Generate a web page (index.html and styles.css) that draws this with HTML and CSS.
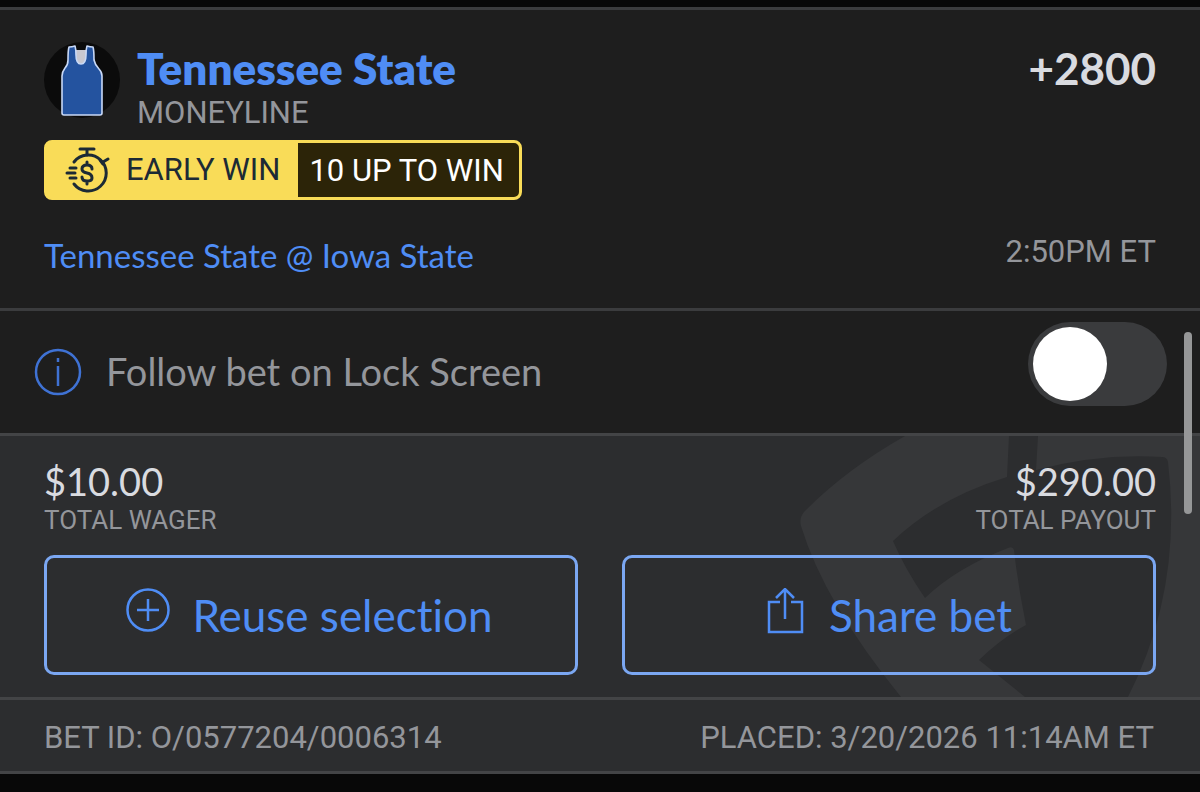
FILE: index.html
```html
<!DOCTYPE html>
<html lang="en">
<head>
	<title>Bet slip</title>
	<meta charset="utf-8">
	<link rel="stylesheet" href="styles.css">
</head>

<body>
	<main class="slip">
		<section class="selection">
			<div class="row">
				<div class="team">
					<svg class="jersey" viewBox="0 0 76 76" aria-hidden="true">
						<circle cx="38" cy="38" r="38" fill="#0b0b0b"/>
						<path d="M31 8H43V18Q42 24 37 24Q32 24 31 18Z" fill="#c9c8d0"/>
						<path d="M25 5Q28 5 31 4Q32 7 32 13Q32 22 37 22Q42 22 42 13Q42 7 43 4Q46 5 49 5Q50 8 50 18Q51 23 55 27Q58 30 58 34V71Q58 73 56 73H20Q18 73 18 71V34Q18 30 21 26Q24 23 24 18Q24 8 25 5Z" fill="#24539f" stroke="#c9d9f7" stroke-width="1.6" stroke-linejoin="round"/>
					</svg>
					<div>
						<h1>Tennessee State</h1>
						<p class="caps">MONEYLINE</p>
					</div>
				</div>
				<p class="odds">+2800</p>
			</div>
			<div class="badge">
				<span class="badge-name">
					<svg class="stopwatch" viewBox="0 0 46 48" aria-hidden="true">
						<g fill="none" stroke="#1c2a35" stroke-width="3" stroke-linecap="round" stroke-linejoin="round">
							<path d="M15 3H29M22 3V9M38 16L43 13M35 14L38 18"/>
							<path d="M9 16A18 18 0 1 1 9 38"/>
							<path d="M5 22H11M2 27H10M5 32H11"/>
							<path d="M27 23Q27 19 22 19Q17 19 17 23Q17 26 22 27Q27 28 27 32Q27 35 22 35Q17 35 17 31M22 16V19M22 35V38"/>
						</g>
					</svg>
					EARLY WIN
				</span>
				<span class="badge-rule">10 UP TO WIN</span>
			</div>
			<div class="row game">
				<a href="#">Tennessee State @ Iowa State</a>
				<time class="caps">2:50PM ET</time>
			</div>
		</section>

		<section class="follow">
			<svg class="info" viewBox="0 0 48 48" aria-hidden="true">
				<circle cx="24" cy="24" r="22" fill="none" stroke="#3f72d4" stroke-width="2.5"/>
				<path d="M24 10V14M24 18V38" stroke="#3f72d4" stroke-width="2.5"/>
			</svg>
			<label for="lock">Follow bet on Lock Screen</label>
			<input type="checkbox" id="lock" class="toggle">
		</section>

		<section class="totals">
			<svg class="shield" viewBox="0 0 420 261" aria-hidden="true">
				<path d="M125 0Q65 34 24 76Q19 82 21 90Q44 166 121 261H245L199 224Q222 202 246 189Q238 150 234 114Q233 110 228 112Q176 132 145 162Q125 133 113 105Q158 62 227 41L229 0Z"/>
				<path d="M258 0L256 34Q320 17 382 21Q387 21 388 26Q403 153 348 261H420V0Z"/>
			</svg>
			<div class="row">
				<div>
					<p class="amount">$10.00</p>
					<p class="total-name">TOTAL WAGER</p>
				</div>
				<div class="payout">
					<p class="amount">$290.00</p>
					<p class="total-name">TOTAL PAYOUT</p>
				</div>
			</div>
			<div class="buttons">
				<button type="button">
					<svg class="btn-icon" viewBox="0 0 44 46" aria-hidden="true">
						<path d="M22 11V33M11 22H33"/>
						<circle cx="22" cy="22" r="20.5"/>
					</svg>
					Reuse selection
				</button>
				<button type="button">
					<svg class="btn-icon" viewBox="0 0 44 46" aria-hidden="true">
						<path d="M17 14H6V44H39V14H28M22 31V2M13 10L22 1L31 10"/>
					</svg>
					Share bet
				</button>
			</div>
		</section>

		<footer class="caps">
			<span>BET ID: O/0577204/0006314</span>
			<span>PLACED: 3/20/2026 11:14AM ET</span>
		</footer>
		<div class="scroll-thumb"></div>
	</main>
</body>
</html>
```
FILE: styles.css
```css
*{
	box-sizing: border-box;
}

body{
	margin: 0;
	padding: 7px 0 18px;
	background: #080808;
	color: #d9dbe0;
	font-family: Lato, "Liberation Sans", sans-serif;
	font-variant-ligatures: none;
}

h1, p{
	margin: 0;
}

.slip{
	position: relative;
	border-top: 3px solid #3b3c3e;
	border-bottom: 3px solid #434446;
	background: #1e1e1e;
}

.row{
	display: flex;
	justify-content: space-between;
}

.selection{
	padding: 32px 44px 32px;
}

.team{
	display: flex;
	gap: 17px;
}

.jersey{
	width: 76px;
	height: 76px;
}

h1{
	color: #4f8df5;
	font-size: 44px;
	line-height: 53px;
	font-weight: 800;
}

.caps{
	color: #94969b;
	font-family: Roboto, "Liberation Sans", sans-serif;
	font-size: 31px;
	line-height: 35px;
	font-weight: 400;
}

.odds{
	font-size: 44px;
	line-height: 53px;
	font-weight: 700;
}

.badge{
	display: inline-flex;
	height: 60px;
	margin-top: 10px;
	border: 3px solid #f9dc58;
	border-radius: 8px;
	background: #2c2408;
	font-family: Roboto, "Liberation Sans", sans-serif;
	font-size: 31px;
	line-height: 56px;
}

.badge-name{
	display: flex;
	align-items: center;
	gap: 15px;
	padding: 0 18px;
	background: #f9dc58;
	color: #1c2a35;
}

.stopwatch{
	width: 46px;
	height: 48px;
}

.badge-rule{
	padding: 0 15px 0 11px;
	color: #fff;
}

.game{
	margin-top: 34px;
}

.game a{
	color: #4f8df5;
	font-size: 33px;
	line-height: 42px;
	text-decoration: none;
}

.follow{
	display: flex;
	align-items: center;
	padding: 11px 33px 27px 34px;
	border-top: 3px solid #3b3c3e;
}

.info{
	width: 48px;
	height: 48px;
	margin-top: 16px;
}

.follow label{
	flex: 1;
	margin: 13px 0 0 24px;
	color: #94969b;
	font-size: 38px;
	line-height: 46px;
}

.toggle{
	position: relative;
	appearance: none;
	width: 139px;
	height: 84px;
	margin: 0;
	padding: 5px;
	border-radius: 42px;
	background: #3a3b3d;
}

.toggle::before{
	content: "";
	display: block;
	width: 74px;
	height: 74px;
	border-radius: 50%;
	background: #fff;
}

.toggle:checked{
	background: #4f8df5;
}

.toggle:checked::before{
	margin-left: auto;
}

.totals{
	position: relative;
	padding: 22px 44px 22px;
	border-top: 3px solid #434446;
	background: #2c2d2f;
}

.shield{
	position: absolute;
	top: 0;
	right: 0;
	height: 100%;
	fill: #363739;
}

.totals .row, .buttons{
	position: relative;
}

.amount{
	font-size: 38px;
	line-height: 47px;
}

.total-name{
	color: #94969b;
	font-family: Roboto, "Liberation Sans", sans-serif;
	font-size: 26px;
	line-height: 30px;
	font-weight: 400;
}

.payout{
	text-align: right;
}

.buttons{
	display: grid;
	grid-template-columns: 1fr 1fr;
	gap: 44px;
	margin-top: 20px;
}

button{
	display: flex;
	align-items: center;
	justify-content: center;
	gap: 22px;
	height: 120px;
	padding: 0 3px 0 0;
	border: 3px solid #7ba7f2;
	border-radius: 10px;
	background: transparent;
	color: #4f8df5;
	font-family: inherit;
	font-variant-ligatures: none;
	font-size: 44px;
}

.btn-icon{
	width: 44px;
	height: 46px;
	margin-bottom: 8px;
	fill: none;
	stroke: #4f8df5;
	stroke-width: 2.5;
}

footer{
	display: flex;
	justify-content: space-between;
	padding: 20px 46px 16px 44px;
	border-top: 3px solid #434446;
	background: #2c2d2f;
}

/* floats over the page like a phone scroll bar */
.scroll-thumb{
	position: absolute;
	top: 322px;
	right: 8px;
	width: 8px;
	height: 182px;
	border-radius: 4px;
	background: #969798;
}
```
